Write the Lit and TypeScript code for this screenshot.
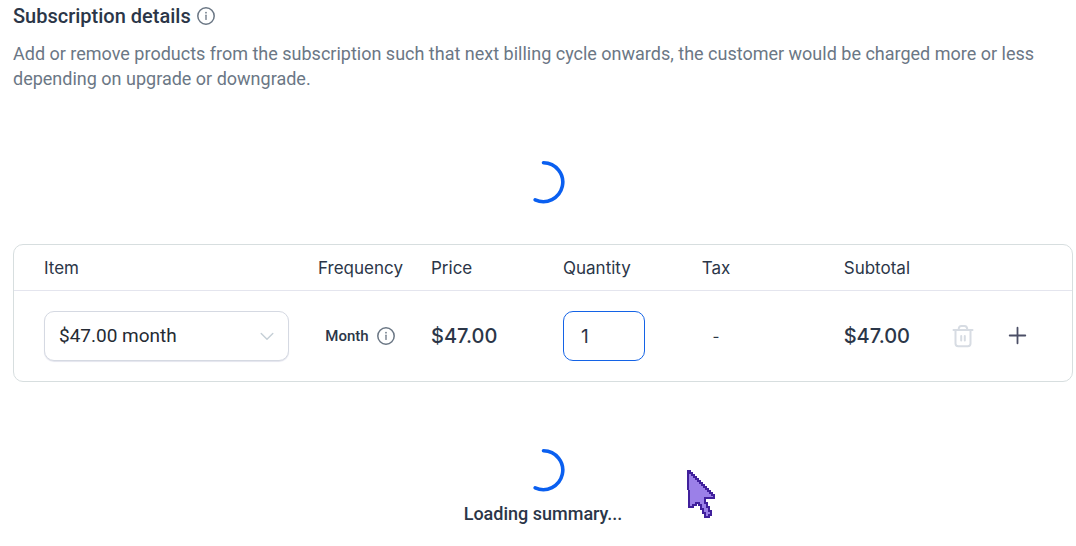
import { LitElement, html, css, svg } from "lit";
import { customElement, state } from "lit/decorators.js";

const infoIcon = html`<svg class="info" viewBox="0 0 20 20" width="20" height="20" aria-hidden="true">
  <circle cx="10" cy="10" r="8.2" fill="none" stroke="#6b7785" stroke-width="1.5" />
  <path d="M10 9.2v4.2" stroke="#6b7785" stroke-width="1.3" stroke-linecap="round" />
  <circle cx="10" cy="6.7" r="0.85" fill="#6b7785" />
</svg>`;

const trashShape = svg`<path
  d="M2.5 6h19M7.700 5.700C7.700 3.200 8.600 2 10.500 2h3c1.900 0 2.800 1.200 2.800 3.700M4.500 6.200v13.300c0 1.800 1 2.700 2.700 2.700h9.600c1.700 0 2.700-.9 2.700-2.700V6.200M10.200 12v4.500M13.800 12v4.500"
  fill="none" stroke="currentColor" stroke-width="2" stroke-linecap="round" stroke-linejoin="round" />`;

@customElement("loading-spinner")
export class LoadingSpinner extends LitElement {
  static styles = css`
    :host {
      display: block;
      width: 44px;
      height: 44px;
    }
    svg {
      display: block;
    }
  `;

  render() {
    return html`<svg viewBox="0 0 44 44" width="44" height="44" role="img" aria-label="Loading">
      <path d="M22.500 2.800A19.400 19.400 0 1 1 14.200 39.800" fill="none" stroke="#0a5ff0" stroke-width="3.600" stroke-linecap="round" />
    </svg>`;
  }
}

@customElement("app-root")
export class AppRoot extends LitElement {
  @state() private quantity = "1";

  static styles = css`
    :host {
      display: block;
      position: relative;
      background: #ffffff;
      color: #2b3648;
      font-family: Roboto, sans-serif;
      font-size: 18px;
    }
    * {
      box-sizing: border-box;
    }
    .page {
      padding: 4px 3px 16px 13px;
    }
    .title {
      display: flex;
      align-items: center;
      gap: 5px;
    }
    h1 {
      margin: 0;
      font-size: 20px;
      line-height: 24px;
      font-weight: 500;
    }
    .info {
      display: block;
      flex: none;
    }
    .intro {
      margin: 13px 0 0;
      line-height: 25px;
      color: #6b7785;
    }
    .loading {
      display: flex;
      flex-direction: column;
      align-items: center;
    }
    .items-loading {
      padding: 69px 0 40px;
    }
    .summary-loading {
      padding-top: 66px;
    }
    .summary-loading p {
      margin: 10px 0 0;
      line-height: 24px;
      font-weight: 500;
    }
    .card {
      border: 1px solid #d7dedf;
      border-radius: 10px;
    }
    table {
      width: 100%;
      table-layout: fixed;
      border-collapse: separate;
      border-spacing: 0;
      font-family: Inter, sans-serif;
    }
    .c-item { width: 289px; }
    .c-frequency { width: 115px; }
    .c-price { width: 132px; }
    .c-quantity { width: 110px; }
    .c-tax { width: 112px; }
    .c-subtotal { width: 151px; }
    .c-actions { width: 149px; }
    th,
    td {
      padding: 0 13px;
      text-align: left;
      font-weight: 400;
    }
    th {
      height: 46px;
      border-bottom: 1px solid #e4e5ee;
      font-size: 17px;
    }
    td {
      height: 90px;
      font-size: 15px;
    }
    th.item,
    td.item {
      padding: 0 14px 0 30px;
    }
    th.center,
    td.center {
      padding: 0;
      text-align: center;
    }
    th.right,
    td.right {
      text-align: right;
    }
    td.money {
      font-size: 20px;
      font-weight: 500;
    }
    .picker {
      position: relative;
    }
    .picker svg {
      position: absolute;
      right: 15px;
      top: 18px;
      pointer-events: none;
    }
    select,
    input {
      display: block;
      height: 50px;
      margin: 0;
      border-radius: 10px;
      background: #ffffff;
      outline: none;
      appearance: none;
    }
    select {
      width: 100%;
      padding: 0 40px 2px 14px;
      border: 1px solid #d5d9e2;
      box-shadow: 0 1px 1px #e4e5ee;
      color: #252b33;
      font: 400 19px Roboto, sans-serif;
    }
    input {
      width: 82px;
      padding: 0 17px;
      border: 1px solid #1463e6;
      color: #2b3648;
      font: 400 19px Inter, sans-serif;
    }
    .frequency {
      display: flex;
      align-items: center;
      justify-content: center;
      gap: 7px;
      font: 500 15px Roboto, sans-serif;
    }
    .actions {
      display: flex;
      align-items: center;
      gap: 31px;
      padding-left: 15px;
    }
    button {
      display: block;
      width: 24px;
      height: 24px;
      padding: 0;
      border: 0;
      background: none;
      color: #4b4f66;
    }
    button:disabled {
      color: #d7dce3;
    }
    button svg {
      display: block;
    }
    .pointer {
      position: absolute;
      left: 686px;
      top: 469px;
      pointer-events: none;
    }
  `;

  private onQuantity(event: Event) {
    this.quantity = (event.target as HTMLInputElement).value;
  }

  render() {
    return html`
      <main class="page">
        <div class="title"><h1>Subscription details</h1>${infoIcon}</div>
        <p class="intro">
          Add or remove products from the subscription such that next billing cycle onwards, the customer would be
          charged more or less depending on upgrade or downgrade.
        </p>

        <div class="loading items-loading"><loading-spinner></loading-spinner></div>

        <div class="card">
          <table>
            <colgroup>
              <col class="c-item" />
              <col class="c-frequency" />
              <col class="c-price" />
              <col class="c-quantity" />
              <col class="c-tax" />
              <col class="c-subtotal" />
              <col class="c-actions" />
            </colgroup>
            <thead>
              <tr>
                <th class="item" scope="col">Item</th>
                <th class="center" scope="col">Frequency</th>
                <th scope="col">Price</th>
                <th scope="col"><label for="quantity">Quantity</label></th>
                <th class="center" scope="col">Tax</th>
                <th class="right" scope="col">Subtotal</th>
                <th aria-label="Actions"></th>
              </tr>
            </thead>
            <tbody>
              <tr>
                <td class="item">
                  <div class="picker">
                    <select aria-label="Item">
                      <option>$47.00 month</option>
                    </select>
                    <svg viewBox="0 0 14 14" width="14" height="14" aria-hidden="true">
                      <path d="M1.200 4.500L7 10.300L12.800 4.500" fill="none" stroke="#c5cfd6" stroke-width="1.400" stroke-linecap="round" stroke-linejoin="round" />
                    </svg>
                  </div>
                </td>
                <td class="center">
                  <div class="frequency"><span>Month</span>${infoIcon}</div>
                </td>
                <td class="money">$47.00</td>
                <td><input id="quantity" type="text" inputmode="numeric" .value=${this.quantity} @input=${this.onQuantity} /></td>
                <td class="center">-</td>
                <td class="money right">$47.00</td>
                <td>
                  <div class="actions">
                    <button type="button" aria-label="Remove item" disabled>
                      <svg viewBox="0 0 24 24" width="24" height="24" aria-hidden="true">${trashShape}</svg>
                    </button>
                    <button type="button" aria-label="Add item">
                      <svg viewBox="0 0 24 24" width="24" height="24" aria-hidden="true">
                        <path d="M11.500 3.700v15.600M3.700 11.500h15.600" fill="none" stroke="currentColor" stroke-width="1.800" stroke-linecap="round" />
                      </svg>
                    </button>
                  </div>
                </td>
              </tr>
            </tbody>
          </table>
        </div>

        <div class="loading summary-loading">
          <loading-spinner></loading-spinner>
          <p>Loading summary...</p>
        </div>
      </main>

      <svg class="pointer" viewBox="0 0 30 50" width="30" height="50" shape-rendering="crispEdges" aria-hidden="true">
        <path
          d="M2 2h2v2h2v2h2v2h2v2h2v2h2v2h2v2h2v2h2v2h2v2h2v2h2v2h2v3h-9v5h2v4h2v4h2v4h-2v2h-4v-4h-2v-4h-2v-4h-2v-2h-3v2h-3v2h-4z"
          fill="#9b80e8" stroke="#40209c" stroke-width="2" stroke-linejoin="miter" />
      </svg>
    `;
  }
}
